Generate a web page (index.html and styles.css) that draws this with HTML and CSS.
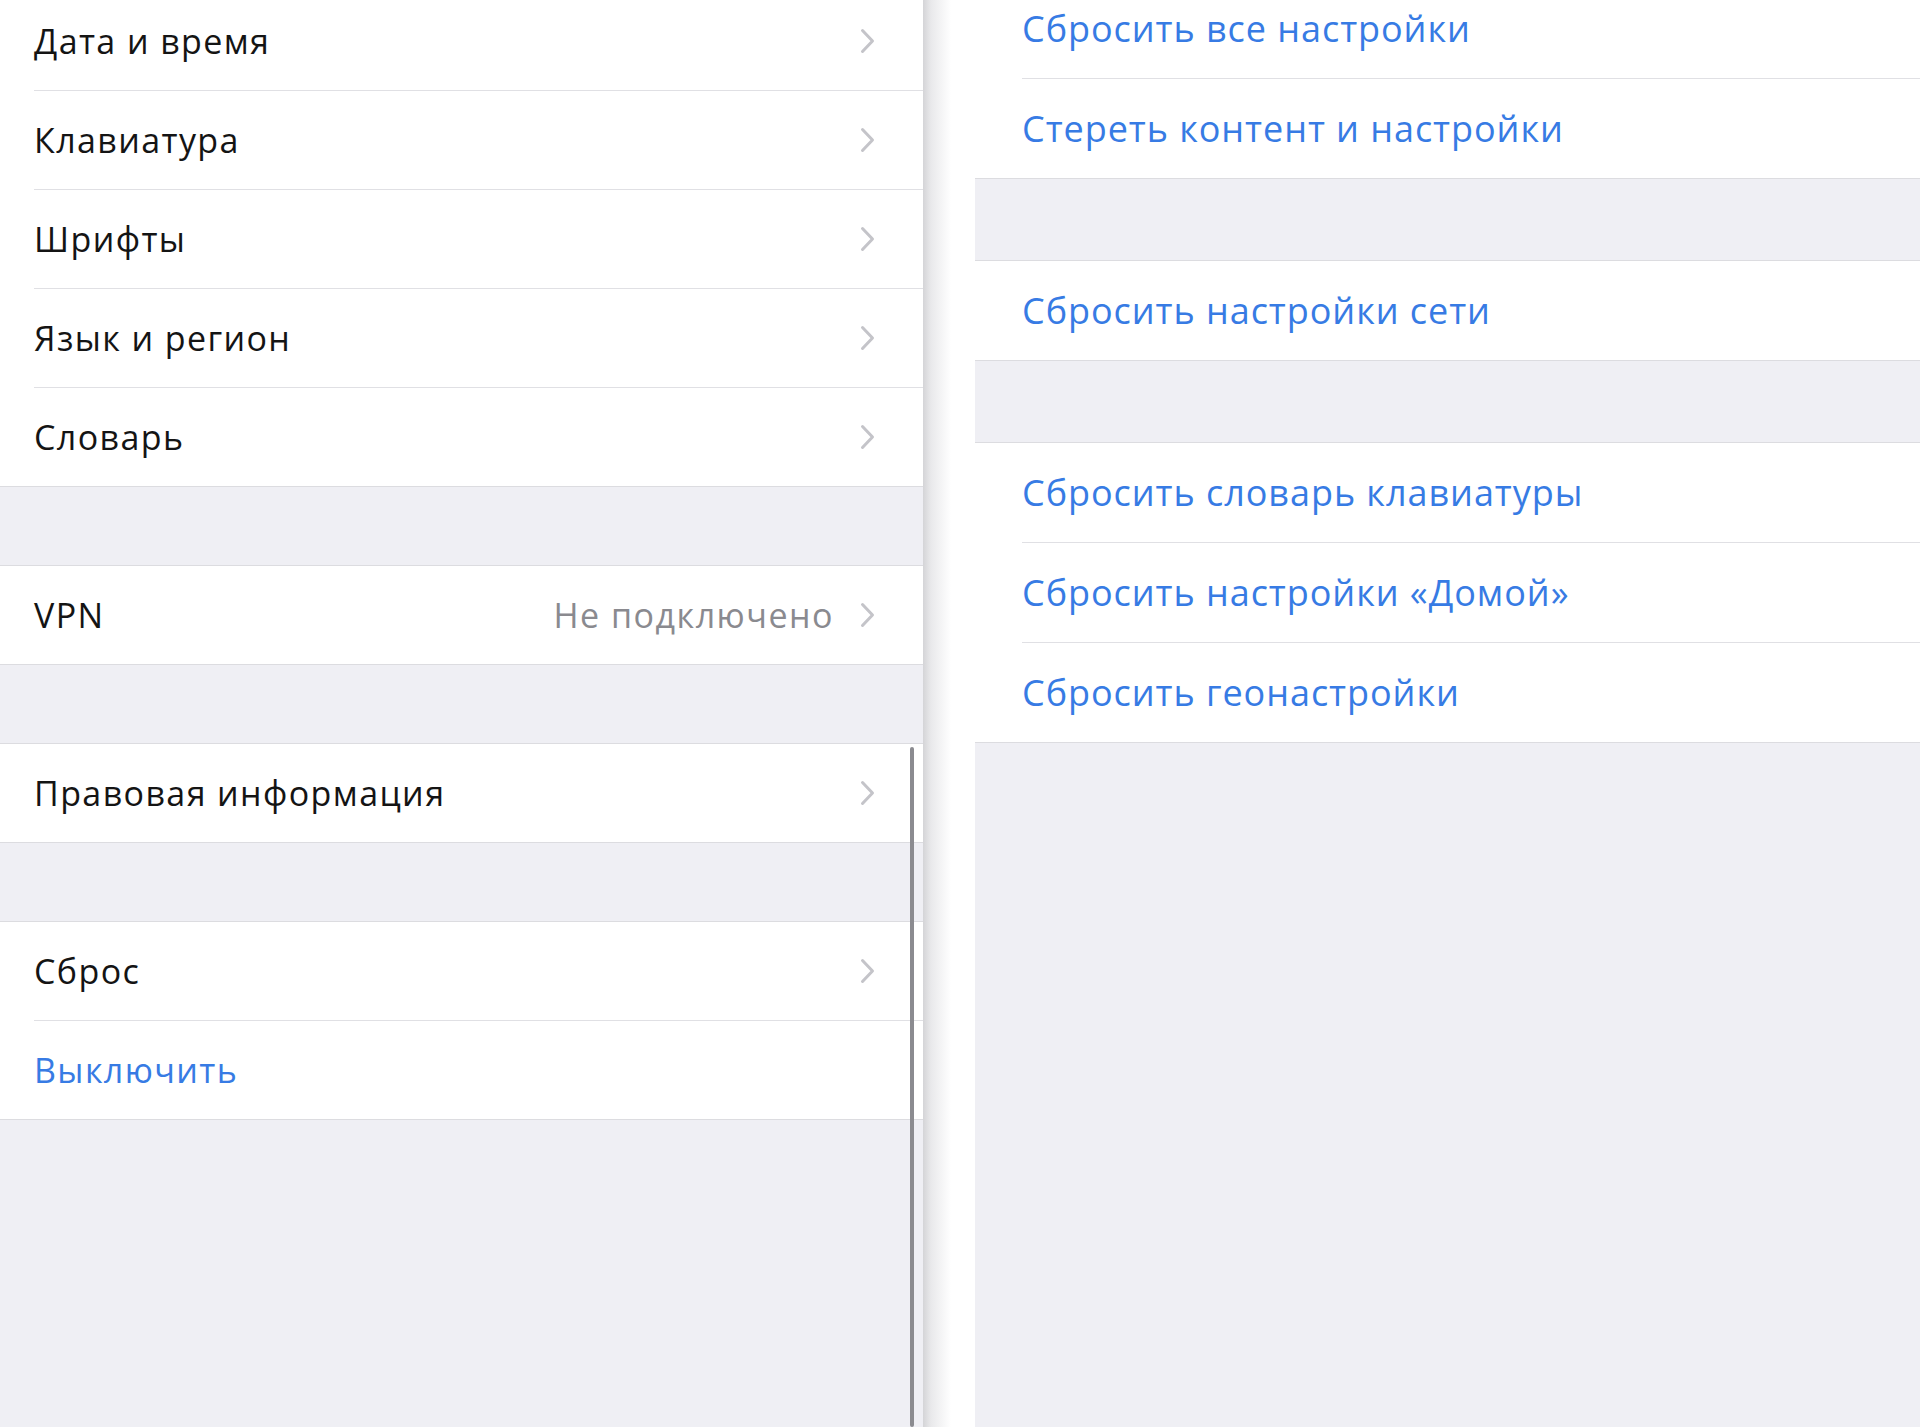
FILE: index.html
```html
<!DOCTYPE html>
<html lang="ru">
<head>
    <meta charset="UTF-8">
    <meta name="viewport" content="width=device-width, initial-scale=1.0">
    <title>Основные — Сброс</title>
    <link rel="stylesheet" href="styles.css">
</head>
<body>
    <div class="split">
        <div class="master">
            <div class="list list-main">
                <div class="group">
                    <div class="cell"><span class="label">Дата и время</span><svg class="chevron" viewBox="0 0 15 26"><polyline points="2.5,2.5 12.5,13 2.5,23.5"/></svg></div>
                    <div class="cell"><span class="label">Клавиатура</span><svg class="chevron" viewBox="0 0 15 26"><polyline points="2.5,2.5 12.5,13 2.5,23.5"/></svg></div>
                    <div class="cell"><span class="label">Шрифты</span><svg class="chevron" viewBox="0 0 15 26"><polyline points="2.5,2.5 12.5,13 2.5,23.5"/></svg></div>
                    <div class="cell"><span class="label">Язык и регион</span><svg class="chevron" viewBox="0 0 15 26"><polyline points="2.5,2.5 12.5,13 2.5,23.5"/></svg></div>
                    <div class="cell"><span class="label">Словарь</span><svg class="chevron" viewBox="0 0 15 26"><polyline points="2.5,2.5 12.5,13 2.5,23.5"/></svg></div>
                </div>

                <div class="group">
                    <div class="cell"><span class="label">VPN</span><span class="value">Не подключено</span><svg class="chevron" viewBox="0 0 15 26"><polyline points="2.5,2.5 12.5,13 2.5,23.5"/></svg></div>
                </div>

                <div class="group">
                    <div class="cell"><span class="label">Правовая информация</span><svg class="chevron" viewBox="0 0 15 26"><polyline points="2.5,2.5 12.5,13 2.5,23.5"/></svg></div>
                </div>

                <div class="group">
                    <div class="cell"><span class="label">Сброс</span><svg class="chevron" viewBox="0 0 15 26"><polyline points="2.5,2.5 12.5,13 2.5,23.5"/></svg></div>
                    <div class="cell"><span class="label action">Выключить</span></div>
                </div>
            </div>

            <div class="scroll-indicator"></div>
        </div>

        <div class="divider"></div>

        <div class="detail">
            <div class="list list-reset">
                <div class="group">
                    <div class="cell"><span class="label action">Сбросить все настройки</span></div>
                    <div class="cell"><span class="label action">Стереть контент и настройки</span></div>
                </div>

                <div class="group">
                    <div class="cell"><span class="label action">Сбросить настройки сети</span></div>
                </div>

                <div class="group">
                    <div class="cell"><span class="label action">Сбросить словарь клавиатуры</span></div>
                    <div class="cell"><span class="label action">Сбросить настройки «Домой»</span></div>
                    <div class="cell"><span class="label action">Сбросить геонастройки</span></div>
                </div>
            </div>
        </div>
    </div>
</body>
</html>
```

FILE: styles.css
```css
body {
    margin: 0;
    height: 100vh;
    overflow: hidden;
    background: #ffffff;
    font-family: 'Open Sans', 'Liberation Sans', sans-serif;
    color: #141414;
}

.split {
    display: flex;
    height: 100vh;
}

/* left column: settings list */
.master {
    position: relative;
    width: 923px;
    flex: none;
    background: #efeff4;
    overflow: hidden;
}

.divider {
    width: 52px;
    flex: none;
    background: linear-gradient(to right, #d4d4d7 0, #e9e9eb 8px, #ffffff 28px);
}

/* right column: reset actions */
.detail {
    flex: 1;
    background: #efeff4;
    overflow: hidden;
}

.list-main {
    margin-top: -9px;
}

.list-reset {
    margin-top: -22px;
}

.group {
    background: #ffffff;
    border-top: 1px solid #dcdce0;
    border-bottom: 1px solid #dcdce0;
}

.group + .group {
    margin-top: 78px;
}

.list-reset .group + .group {
    margin-top: 81px;
}

.cell {
    display: flex;
    align-items: center;
    height: 98px;
    margin-left: 34px;
    padding-right: 48px;
    border-top: 1px solid #e0e0e4;
}

.list-reset .cell {
    height: 99px;
    margin-left: 47px;
}

.cell:first-child {
    border-top: 0;
}

.label {
    flex: 1;
    font-size: 34px;
    letter-spacing: 1.4px;
    white-space: nowrap;
}

.list-reset .label {
    font-size: 36px;
    letter-spacing: 0.95px;
}

.label.action {
    color: #377be4;
}

.value {
    font-size: 34px;
    letter-spacing: 1.5px;
    color: #8a8a8f;
    margin-right: 26px;
}

.chevron {
    width: 15px;
    height: 26px;
    flex: none;
}

.chevron polyline {
    fill: none;
    stroke: #c4c4c9;
    stroke-width: 3;
    stroke-linecap: round;
    stroke-linejoin: round;
}

.scroll-indicator {
    position: absolute;
    top: 747px;
    bottom: 0;
    right: 9px;
    width: 4px;
    border-radius: 2px;
    background: #8b8b90;
}
```
